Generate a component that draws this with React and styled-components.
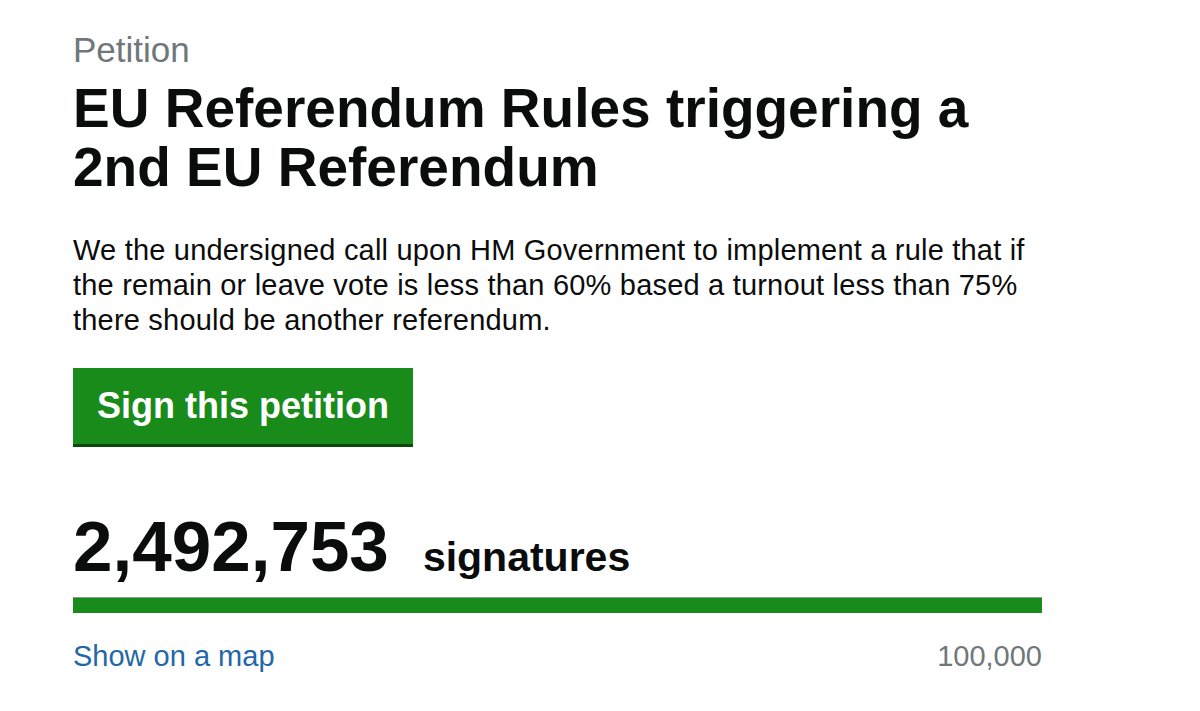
import React from "react";
import styled, { createGlobalStyle } from "styled-components";

const Global = createGlobalStyle`
  html, body { margin: 0; padding: 0; background: #ffffff; }
  body { font-family: "Liberation Sans", Arial, sans-serif; color: #0b0c0c; }
`;

const Page = styled.main`
  width: 969px;
  padding: 29px 0 0 73px;
  display: flex;
  flex-direction: column;
`;

const Kicker = styled.div`
  font-size: 35px;
  line-height: 42px;
  color: #6f777b;
`;

const Title = styled.h1`
  margin: 8px 0 0;
  font-size: 55px;
  line-height: 59px;
  font-weight: 700;
  color: #0b0c0c;
`;

const Body = styled.p`
  margin: 36px 0 0;
  font-size: 29px;
  line-height: 35px;
  letter-spacing: 0.2px;
  color: #0b0c0c;
`;

const Button = styled.button`
  align-self: flex-start;
  margin-top: 30px;
  border: 0;
  padding: 0 24px;
  height: 76px;
  background: #198b1b;
  box-shadow: 0 3px 0 #0b4a0c;
  color: #ffffff;
  font-family: inherit;
  font-size: 36px;
  font-weight: 700;
  cursor: pointer;
`;

const CountRow = styled.div`
  margin-top: 63px;
  display: flex;
  align-items: baseline;
  gap: 34px;
`;

const Count = styled.span`
  font-size: 71px;
  line-height: 80px;
  font-weight: 700;
`;

const CountLabel = styled.span`
  font-size: 41px;
  font-weight: 700;
`;

const Track = styled.div`
  margin-top: 10px;
  height: 16px;
  background: #dee0e2;
  border-top: 1px solid #8f9a8f;
  box-sizing: border-box;
`;

const Fill = styled.div`
  height: 100%;
  background: #198b1b;
`;

const Footer = styled.div`
  margin-top: 25px;
  display: flex;
  justify-content: space-between;
  align-items: baseline;
  font-size: 29px;
  line-height: 37px;
`;

const MapLink = styled.a`
  color: #2467a6;
  text-decoration: none;
`;

const Threshold = styled.span`
  color: #6f777b;
`;

export default function App() {
  const signatures = 2492753;
  const threshold = 100000;
  const pct = Math.min(100, (signatures / threshold) * 100);
  return (
    <>
      <Global />
      <Page>
        <Kicker>Petition</Kicker>
        <Title>EU Referendum Rules triggering a 2nd EU Referendum</Title>
        <Body>
          We the undersigned call upon HM Government to implement a rule that if
          the remain or leave vote is less than 60% based a turnout less than 75%
          there should be another referendum.
        </Body>
        <Button>Sign this petition</Button>
        <CountRow>
          <Count>2,492,753</Count>
          <CountLabel>signatures</CountLabel>
        </CountRow>
        <Track>
          <Fill style={{ width: `${pct}%` }} />
        </Track>
        <Footer>
          <MapLink href="#">Show on a map</MapLink>
          <Threshold>100,000</Threshold>
        </Footer>
      </Page>
    </>
  );
}
